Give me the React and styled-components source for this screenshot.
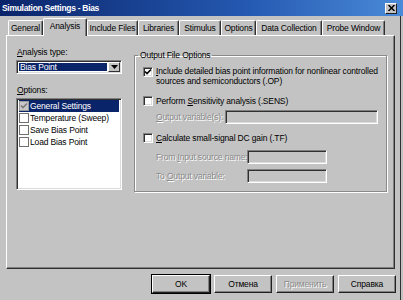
import React from "react";
import styled, { createGlobalStyle } from "styled-components";

const FONT = `"Liberation Sans", Arial, sans-serif`;
const FACE = "#c3c3c3";

const Global = createGlobalStyle`
  html, body { margin: 0; padding: 0; background: ${FACE}; }
  body { font-family: ${FONT}; font-size: 8.5px; letter-spacing: -0.15px; color: #000; }
  * { box-sizing: border-box; }
`;

const Window = styled.div`
  width: 403px;
  height: 300px;
  background: ${FACE};
  display: flex;
  flex-direction: column;
  box-shadow: inset -2px 0 0 ${FACE}, inset -3px 0 0 #303030;
  overflow: hidden;
`;

const TitleBar = styled.div`
  height: 16px;
  flex: none;
  display: flex;
  align-items: center;
  justify-content: space-between;
  padding: 0 6px 0 2px;
  background: linear-gradient(to right, #0a246a 0%, #2458b0 60%, #4a8ad8 100%);
`;

const TitleText = styled.span`
  color: #fff;
  font-weight: bold;
  font-size: 8.5px;
  letter-spacing: -0.3px;
  line-height: 12px;
  white-space: nowrap;
`;

const CloseButton = styled.div`
  width: 12px;
  height: 11px;
  background: ${FACE};
  border-top: 1px solid #fff;
  border-left: 1px solid #fff;
  border-right: 1px solid #202020;
  border-bottom: 1px solid #202020;
  display: flex;
  align-items: center;
  justify-content: center;
`;

const TabStrip = styled.div`
  height: 19px;
  flex: none;
  display: flex;
  align-items: flex-end;
  padding-left: 8px;
  position: relative;
  z-index: 1;
`;

const Tab = styled.div`
  width: ${(p) => p.$w}px;
  height: ${(p) => (p.$active ? 18 : 15)}px;
  margin-bottom: ${(p) => (p.$active ? -1 : 0)}px;
  background: ${FACE};
  border-top: 1px solid #fff;
  border-left: 1px solid #fff;
  border-right: 1px solid #303030;
  border-radius: 2px 2px 0 0;
  box-shadow: inset -1px 0 0 #808080;
  display: flex;
  align-items: center;
  justify-content: center;
  padding-bottom: ${(p) => (p.$active ? 3 : 0)}px;
  white-space: nowrap;
  line-height: 10px;
`;

const Panel = styled.div`
  margin-left: 6px;
  width: 389px;
  height: 234px;
  flex: none;
  border-top: 1px solid #fff;
  border-left: 1px solid #fff;
  border-right: 1px solid #303030;
  border-bottom: 1px solid #303030;
  box-shadow: inset -1px -1px 0 #808080;
  display: flex;
  align-items: flex-start;
  padding: 11px 0 0 9px;
`;

const LeftColumn = styled.div`
  width: 106px;
  display: flex;
  flex-direction: column;
`;

const FieldLabel = styled.div`
  line-height: 10px;
  height: 10px;
  margin-top: ${(p) => p.$top || 0}px;
  margin-bottom: 3px;
  padding-left: 1px;
  white-space: nowrap;
`;

const Sunken = styled.div`
  border-top: 1px solid #808080;
  border-left: 1px solid #808080;
  border-right: 1px solid #fff;
  border-bottom: 1px solid #fff;
  box-shadow: inset 1px 1px 0 #303030, inset -1px -1px 0 #dcdcdc;
`;

const ComboBox = styled(Sunken)`
  height: 14px;
  background: #fff;
  display: flex;
  padding: 2px;
  gap: 1px;
`;

const ComboValue = styled.div`
  flex: 1;
  background: #0a246a;
  color: #fff;
  line-height: 9px;
  padding-left: 1px;
  white-space: nowrap;
`;

const ComboButton = styled.div`
  width: 12px;
  margin: -1px -1px -1px 0;
  background: ${FACE};
  border-top: 1px solid #fff;
  border-left: 1px solid #fff;
  border-right: 1px solid #303030;
  border-bottom: 1px solid #303030;
  display: flex;
  align-items: center;
  justify-content: center;
`;

const ListBox = styled(Sunken)`
  height: 92px;
  background: #fff;
  padding: 1px 2px;
  display: flex;
  flex-direction: column;
`;

const ListItem = styled.div`
  height: 12px;
  display: flex;
  align-items: center;
  gap: 1px;
  background: ${(p) => (p.$selected ? "#0a246a" : "transparent")};
  color: ${(p) => (p.$selected ? "#fff" : "#000")};
  white-space: nowrap;
  line-height: 10px;
`;

const ListCheck = styled.div`
  width: 10px;
  height: 10px;
  flex: none;
  border: 1px solid ${(p) => (p.$selected ? "#9a9a9a" : "#707070")};
  background: ${(p) => (p.$selected ? "#c8c8c8" : "#fff")};
  display: flex;
  align-items: center;
  justify-content: center;
`;

const GroupBox = styled.fieldset`
  margin: 3px 0 0 12px;
  width: 253px;
  padding: 0 8px 8px 8px;
  border: 1px solid #8a8a8a;
  box-shadow: inset 1px 1px 0 #fff, 1px 1px 0 #fff;
  min-width: 0;
`;

const Legend = styled.legend`
  padding: 0 2px;
  margin-left: -5px;
  line-height: 10px;
  height: 10px;
  white-space: nowrap;
`;

const CheckRow = styled.div`
  display: flex;
  align-items: ${(p) => (p.$multi ? "flex-start" : "center")};
  gap: 3px;
  margin-top: ${(p) => p.$top}px;
  line-height: 10px;
  white-space: nowrap;
`;

const CheckBox = styled(Sunken)`
  width: 10px;
  height: 10px;
  flex: none;
  background: #fff;
  margin-top: ${(p) => (p.$multi ? 1 : 0)}px;
  display: flex;
  align-items: center;
  justify-content: center;
`;

const InputRow = styled.div`
  display: flex;
  align-items: center;
  padding-left: 13px;
  margin-top: ${(p) => p.$top}px;
`;

const DisabledLabel = styled.span`
  width: ${(p) => p.$w}px;
  flex: none;
  color: #8a8a8a;
  text-shadow: 1px 1px 0 #fff;
  white-space: nowrap;
  line-height: 10px;
`;

const TextInput = styled(Sunken)`
  width: ${(p) => p.$w}px;
  height: 14px;
  background: ${FACE};
`;

const ButtonRow = styled.div`
  display: flex;
  justify-content: flex-end;
  gap: 4px;
  margin-top: 6px;
  padding-right: 7px;
`;

const DialogButton = styled.div`
  width: 58px;
  height: 18px;
  background: ${FACE};
  border-top: 1px solid #fff;
  border-left: 1px solid #fff;
  border-right: 1px solid #202020;
  border-bottom: 1px solid #202020;
  box-shadow: ${(p) =>
    p.$default
      ? "inset -1px -1px 0 #808080, 0 0 0 1px #000"
      : "inset -1px -1px 0 #808080"};
  display: flex;
  align-items: center;
  justify-content: center;
  color: ${(p) => (p.$disabled ? "#8a8a8a" : "#000")};
  text-shadow: ${(p) => (p.$disabled ? "1px 1px 0 #fff" : "none")};
  line-height: 10px;
  white-space: nowrap;
`;

const Check = ({ color = "#000" }) => (
  <svg width="8" height="8" viewBox="0 0 8 8">
    <path d="M1 3.5 L3 5.5 L7 1.5" fill="none" stroke={color} strokeWidth="1.6" />
  </svg>
);

const tabs = [
  ["General", 35],
  ["Analysis", 44],
  ["Include Files", 51],
  ["Libraries", 41],
  ["Stimulus", 42],
  ["Options", 35],
  ["Data Collection", 66],
  ["Probe Window", 63],
];

const options = [
  ["General Settings", true],
  ["Temperature (Sweep)", false],
  ["Save Bias Point", false],
  ["Load Bias Point", false],
];

export default function App() {
  return (
    <>
      <Global />
      <Window>
        <TitleBar>
          <TitleText>Simulation Settings - Bias</TitleText>
          <CloseButton>
            <svg width="7" height="6" viewBox="0 0 7 6">
              <path d="M0.5 0 L6.5 6 M6.5 0 L0.5 6" stroke="#000" strokeWidth="1.5" />
            </svg>
          </CloseButton>
        </TitleBar>
        <TabStrip>
          {tabs.map(([label, w]) => (
            <Tab key={label} $w={w} $active={label === "Analysis"}>
              {label}
            </Tab>
          ))}
        </TabStrip>
        <Panel>
          <LeftColumn>
            <FieldLabel>
              <u>A</u>nalysis type:
            </FieldLabel>
            <ComboBox>
              <ComboValue>Bias Point</ComboValue>
              <ComboButton>
                <svg width="7" height="4" viewBox="0 0 7 4">
                  <path d="M0 0 H7 L3.5 4 Z" fill="#000" />
                </svg>
              </ComboButton>
            </ComboBox>
            <FieldLabel $top={11}>
              <u>O</u>ptions:
            </FieldLabel>
            <ListBox>
              {options.map(([label, sel]) => (
                <ListItem key={label} $selected={sel}>
                  <ListCheck $selected={sel}>{sel && <Check color="#7a7a7a" />}</ListCheck>
                  {label}
                </ListItem>
              ))}
            </ListBox>
          </LeftColumn>
          <GroupBox>
            <Legend>Output File Options</Legend>
            <CheckRow $top={6} $multi>
              <CheckBox $multi>
                <Check />
              </CheckBox>
              <span>
                <u>I</u>nclude detailed bias point information for nonlinear controlled
                <br />
                sources and semiconductors (.OP)
              </span>
            </CheckRow>
            <CheckRow $top={10}>
              <CheckBox />
              <span>
                Perform <u>S</u>ensitivity analysis (.SENS)
              </span>
            </CheckRow>
            <InputRow $top={4}>
              <DisabledLabel $w={69}>
                <u>O</u>utput variable(s):
              </DisabledLabel>
              <TextInput $w={154} />
            </InputRow>
            <CheckRow $top={9}>
              <CheckBox />
              <span>
                <u>C</u>alculate small-signal DC gain (.TF)
              </span>
            </CheckRow>
            <InputRow $top={7}>
              <DisabledLabel $w={91}>
                From <u>I</u>nput source name:
              </DisabledLabel>
              <TextInput $w={80} />
            </InputRow>
            <InputRow $top={5}>
              <DisabledLabel $w={91}>
                To <u>O</u>utput variable:
              </DisabledLabel>
              <TextInput $w={80} />
            </InputRow>
          </GroupBox>
        </Panel>
        <ButtonRow>
          <DialogButton $default>OK</DialogButton>
          <DialogButton>Отмена</DialogButton>
          <DialogButton $disabled>Применить</DialogButton>
          <DialogButton>Справка</DialogButton>
        </ButtonRow>
      </Window>
    </>
  );
}
